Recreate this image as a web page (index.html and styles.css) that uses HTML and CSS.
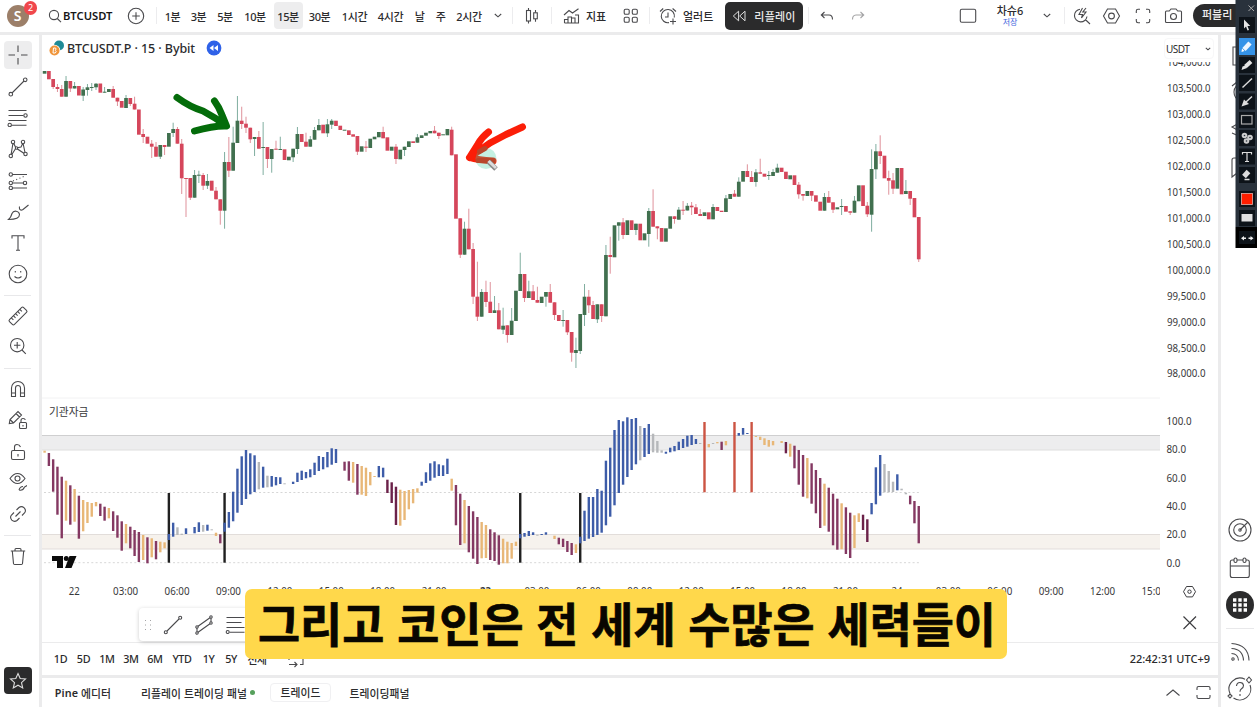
FILE: index.html
```html
<!DOCTYPE html>
<html lang="ko">
<head>
<meta charset="utf-8">
<title>BTCUSDT.P</title>
<link rel="stylesheet" href="styles.css">
</head>
<body>
<div class="app">
  <header class="topbar">
    <div class="slot user"><span class="avatar">S</span><span class="badge">2</span></div>
    <div class="slot search"><svg class="ic" width="14" height="14" viewBox="0 0 14 14"><circle cx="6" cy="6" r="4.6"/><path d="M9.3 9.5 13 13.2"/></svg><b>BTCUSDT</b></div>
    <div class="slot"><svg class="ic" width="18" height="18" viewBox="0 0 18 18"><circle cx="9" cy="9" r="7.7"/><path d="M9 5.2v7.6M5.2 9h7.6"/></svg></div>
    <i class="sep"></i>
    <div class="slot tf">1분</div>
    <div class="slot tf">3분</div>
    <div class="slot tf">5분</div>
    <div class="slot tf">10분</div>
    <div class="slot tf active">15분</div>
    <div class="slot tf">30분</div>
    <div class="slot tf">1시간</div>
    <div class="slot tf">4시간</div>
    <div class="slot tf">날</div>
    <div class="slot tf">주</div>
    <div class="slot tf">2시간</div>
    <div class="slot"><svg class="ic" width="8" height="5" viewBox="0 0 8 5"><path d="M.8 1 4 3.8 7.2 1"/></svg></div>
    <i class="sep"></i>
    <div class="slot"><svg class="ic" width="14" height="18" viewBox="0 0 14 18"><rect x="1.5" y="3.5" width="4" height="10.5"/><path d="M3.5 1v2.5M3.5 14v2.5M10.5 3v2.8M10.5 12v2.8"/><rect x="8.7" y="5.8" width="3.6" height="6"/></svg></div>
    <i class="sep"></i>
    <div class="slot labelled"><svg class="ic" width="17" height="16" viewBox="0 0 17 16"><path d="M1 7 6 2.5 9.5 5 15.5.8M1.5 15v-3.5H5V15M5 11.500V9h3.500v6M8.500 10H12v5M12 7h3.500v8H1.500"/></svg><span>지표</span></div>
    <div class="slot"><svg class="ic" width="16" height="16" viewBox="0 0 16 16"><rect x="1.200" y="1.200" width="5" height="5" rx="1.300"/><rect x="9.300" y="1.200" width="5" height="5" rx="1.300"/><rect x="1.200" y="9.300" width="5" height="5" rx="1.300"/><rect x="9.300" y="9.300" width="5" height="5" rx="1.300"/></svg></div>
    <i class="sep"></i>
    <div class="slot labelled alert"><svg class="ic" width="18" height="18" viewBox="0 0 18 18"><path d="M15.300 10.500A6.600 6.600 0 1 0 10 15.600M9 5.500V10H6M1 4.500 4.200 1.500M13.600 1.500 17 4.500M14 11.500v6M11 14.500h6"/></svg><span>얼러트</span></div>
    <div class="slot"><div class="replay"><svg width="15" height="12" viewBox="0 0 15 12"><path d="M6.600 1.200v9.600L1.300 6zM13 1.200v9.600L7.700 6z"/></svg><span>리플레이</span></div></div>
    <i class="sep"></i>
    <div class="slot"><svg class="ic" width="14" height="10" viewBox="0 0 14 10"><path d="M4.500 1 1.300 4l3.200 3M1.300 4H9c2.500 0 3.500 2 3.500 4.500"/></svg></div>
    <div class="slot dim"><svg class="ic" width="14" height="10" viewBox="0 0 14 10"><path d="M9.500 1l3.200 3-3.200 3M12.700 4H5C2.500 4 1.500 6 1.500 8.500"/></svg></div>
    <span></span>
    <div class="slot"><svg class="ic" width="18" height="16" viewBox="0 0 18 16"><rect x="1.300" y="1.300" width="15.400" height="13" rx="1.500"/></svg></div>
    <div class="slot layout"><b>차슈6</b><small>저장</small></div>
    <div class="slot"><svg class="ic" width="8" height="5" viewBox="0 0 8 5"><path d="M.8 1 4 3.800 7.200 1"/></svg></div>
    <i class="sep"></i>
    <div class="slot"><svg class="ic" width="18" height="18" viewBox="0 0 18 18"><path d="M7 2.300A6.300 6.300 0 1 0 14 9.500M12.300 12.500 17 17M9.500 1 6 7.500h3.500L8.500 11l4.500-6H9.800L13 1"/></svg></div>
    <div class="slot"><svg class="ic" width="19" height="18" viewBox="0 0 19 18"><path d="M5.500 2h8l4 7-4 7h-8l-4-7z"/><circle cx="9.500" cy="9" r="2.900"/></svg></div>
    <div class="slot"><svg class="ic" width="16" height="16" viewBox="0 0 16 16"><path d="M1.300 5V3q0-1.700 1.700-1.700h2M11 1.300h2q1.700 0 1.700 1.700v2M14.700 11v2q0 1.700-1.700 1.700h-2M5 14.700H3Q1.300 14.700 1.300 13v-2"/></svg></div>
    <div class="slot"><svg class="ic" width="19" height="16" viewBox="0 0 19 16"><path d="M2.500 3H5.300L7 1h5l1.700 2h2.800q1 0 1 1v9.500q0 1-1 1h-14q-1 0-1-1V4q0-1 1-1z"/><circle cx="9.500" cy="8.500" r="3"/></svg></div>
    <div class="slot publish"><span>퍼블리</span></div>
  </header>

  <nav class="tools">
    <div class="slot"><span class="picked"><svg class="ic" width="20" height="20" viewBox="0 0 20 20"><path d="M10 .5V7M10 13v6.500M.5 10H7M13 10h6.500"/></svg></span></div>
    <div class="slot"><svg class="ic" width="20" height="20" viewBox="0 0 20 20"><path d="M4 16 16 4"/><circle cx="2.800" cy="17.200" r="1.800"/><circle cx="17.200" cy="2.800" r="1.800"/></svg></div>
    <div class="slot"><svg class="ic" width="21" height="18" viewBox="0 0 21 18"><path d="M1.500 1.500h18M1.500 6.500h15M1.500 11.500h18M4.500 16.200h15"/><circle cx="18.500" cy="6.500" r="1.700"/><circle cx="2.700" cy="16" r="1.700"/></svg></div>
    <div class="slot"><svg class="ic" width="20" height="20" viewBox="0 0 20 20"><path d="M5 4 3 16M15 4l2.300 11M5.500 4 8 9l9 6M3.500 16 8 9l5-1 2-4"/><circle cx="5" cy="3" r="1.700"/><circle cx="15" cy="3" r="1.700"/><circle cx="8.500" cy="9" r="1.200"/><circle cx="2.800" cy="17" r="1.700"/><circle cx="17.500" cy="15" r="1.700"/></svg></div>
    <div class="slot"><svg class="ic" width="20" height="18" viewBox="0 0 20 18"><path d="M4.500 2.500H19M4.500 11h11M4.500 16H19"/><path stroke-dasharray="1 2.500" d="M5 9 17 4"/><circle cx="2.800" cy="2.500" r="1.700"/><circle cx="2.800" cy="11" r="1.700"/><circle cx="17" cy="11" r="1.700"/><circle cx="2.800" cy="16" r="1.700"/></svg></div>
    <div class="slot"><svg class="ic" width="22" height="18" viewBox="0 0 22 18"><path d="M1.500 16.500Q4 14.500 5 10.500C6.500 7 12 7.500 12.500 11.500 12.500 15 9 16.500 1.500 16.500zM12.500 3.500c-.5 3 1 4.500 3.500 3L21.500 2"/></svg></div>
    <div class="slot"><svg class="ic" width="16" height="18" viewBox="0 0 16 18"><path d="M2 4.500V1.800h12v2.700M8 1.800v14.400M6 16.200h4"/></svg></div>
    <div class="slot"><svg class="ic" width="20" height="20" viewBox="0 0 20 20"><circle cx="10" cy="10" r="8.800"/><path d="M6.500 12.500q3.500 3 7 0M7.300 7v1.600M12.700 7v1.600"/></svg></div>
    <i class="rule"></i>
    <div class="slot"><svg class="ic" width="22" height="22" viewBox="0 0 22 22"><g transform="rotate(-45 11 11)"><rect x="1" y="7.500" width="20" height="7" rx="1.500"/><path d="M5 7.500v3M8 7.500v3M11 7.500v3M14 7.500v3M17 7.500v3"/></g></svg></div>
    <div class="slot"><svg class="ic" width="18" height="18" viewBox="0 0 18 18"><circle cx="8.200" cy="8.200" r="6.700"/><path d="M8.200 5v6.400M5 8.200h6.400M13 13l3.800 3.800"/></svg></div>
    <i class="rule"></i>
    <div class="slot"><svg class="ic" width="16" height="18" viewBox="0 0 16 18"><path d="M1.500 16.500V8a6.500 6.500 0 0 1 13 0v8.500h-4V8a2.500 2.500 0 0 0-5 0v8.500zM1.500 13h4M10.500 13h4"/></svg></div>
    <div class="slot"><svg class="ic" width="20" height="20" viewBox="0 0 20 20"><path d="M1.300 13.500 2 9.500 10 1.500l3.500 3.500-8 8zM8 3.500 11.500 7M2 9.500 5.500 13"/><rect x="11.500" y="12.500" width="7" height="6" rx="1"/><path d="M13 12.500v-2q0-2 2-2t2.300 1.500M15 15v1.500"/></svg></div>
    <div class="slot"><svg class="ic" width="16" height="18" viewBox="0 0 16 18"><rect x="1.500" y="7.500" width="13" height="9" rx="1.500"/><path d="M4.500 7.500V4q0-2.500 2.500-2.500T10.500 4M8 11v2.500"/></svg></div>
    <div class="slot"><svg class="ic" width="18" height="20" viewBox="0 0 18 20"><path d="M1 6.500Q4.500 1.500 8.500 1.500T16 6.500Q12.500 11.500 8.500 11.500T1 6.500z"/><circle cx="8.500" cy="6.500" r="2.500"/><path d="M10 18q4 1 5.500-3L18 13.500M10 18q1-3.500 4-3.500"/></svg></div>
    <div class="slot"><svg class="ic" width="18" height="18" viewBox="0 0 18 18"><path d="M7.500 5 10 2.500Q12.500.500 15.200 2.800 17.500 5.500 15.500 8L13 10.500M5 7.500 2.500 10Q.500 12.500 2.800 15.200 5.500 17.500 8 15.500L10.500 13M6.500 11.500l5-5"/></svg></div>
    <i class="rule"></i>
    <div class="slot"><svg class="ic" width="16" height="19" viewBox="0 0 16 19"><path d="M.8 4h14.400M5 4V2.500Q5 1.500 6 1.500h4q1 0 1 1V4M2.300 4 3.500 16.500q.1 1 1.200 1h6.600q1.100 0 1.200-1L13.700 4"/></svg></div>
    <span></span>
    <div class="slot"><span class="star"><svg width="18" height="18" viewBox="0 0 18 18"><path d="M9 1.500 11.200 6.500l5.300.5-4 3.600 1.200 5.400L9 13.200 4.300 16l1.200-5.400L1.500 7l5.300-.5z"/></svg></span></div>
  </nav>

  <main class="chart">
    <svg id="plot" class="plot" width="1176" height="607" viewBox="42 35 1176 607"></svg>
    <div class="legend">
      <svg width="16" height="16" viewBox="0 0 16 16"><circle cx="10" cy="5.500" r="5" fill="#1f8a96"/><circle cx="5.500" cy="10.500" r="5.800" fill="#fff"/><circle cx="5.500" cy="10.500" r="5" fill="#f0953a"/><path d="M4.500 8h2q1.300 1-.2 2.300 1.800 1.200 0 2.700H4z" fill="none" stroke="#fff"/></svg>
      <span class="symbol">BTCUSDT.P · 15 · Bybit</span>
      <svg width="16" height="16" viewBox="0 0 16 16"><circle cx="8" cy="8" r="7.400" fill="#2f62e8"/><path d="M7.500 5v6L3.500 8zM12 5v6L8 8z" fill="#fff"/></svg>
    </div>
    <div class="currency"><span>USDT</span><svg class="ic" width="6" height="4" viewBox="0 0 6 4"><path d="M.8.8 3 2.800 5.200.8"/></svg></div>
    <div class="drawbar">
      <svg class="ic grip" width="8" height="12" viewBox="0 0 8 12"><path d="M1 1.500h1M6 1.500h1M1 6h1M6 6h1M1 10.500h1M6 10.500h1"/></svg>
      <svg class="ic" width="20" height="20" viewBox="0 0 20 20"><path d="M4 16 16 4"/><circle cx="2.800" cy="17.200" r="1.500"/><circle cx="17.200" cy="2.800" r="1.500"/></svg>
      <svg class="ic" width="20" height="20" viewBox="0 0 20 20"><path d="M3 12 17 2M3 18 17 8M3 12v6M17 2v6"/><circle cx="3" cy="12" r="1.200"/><circle cx="17" cy="2" r="1.200"/><circle cx="3" cy="18" r="1.200"/><circle cx="17" cy="8" r="1.200"/></svg>
      <svg class="ic" width="21" height="18" viewBox="0 0 21 18"><path d="M1.500 1.500h18M1.500 6.500h15M1.500 11.500h18M4.500 16.200h15"/><circle cx="2.700" cy="16" r="1.500"/></svg>
    </div>
  </main>

  <footer class="ranges">
    <div class="slot">1D</div><div class="slot">5D</div><div class="slot">1M</div><div class="slot">3M</div><div class="slot">6M</div><div class="slot">YTD</div><div class="slot">1Y</div><div class="slot">5Y</div><div class="slot">전체</div>
    <div class="slot goto"><svg class="ic" width="18" height="18" viewBox="0 0 18 18"><path d="M2 10V5q0-1.500 1.500-1.500h11Q16 3.500 16 5v9.500h-3M2 14.500h8M7.500 12l2.500 2.500L7.500 17"/></svg></div>
    <div class="clock">22:42:31 UTC+9</div>
  </footer>

  <footer class="panels">
    <div class="slot"><b>Pine</b>&nbsp;에디터</div>
    <div class="slot">리플레이 트레이딩 패널<i class="dot"></i></div>
    <div class="slot"><span class="tab">트레이드</span></div>
    <div class="slot">트레이딩패널</div>
    <span></span>
    <div class="slot"><svg class="ic" width="16" height="9" viewBox="0 0 16 9"><path d="M1.500 7.500 8 2l6.500 5.500"/></svg></div>
    <div class="slot"><svg class="ic" width="15" height="15" viewBox="0 0 15 15"><path d="M1 5V3q0-1.500 1.500-1.500h10Q14 1.500 14 3v2M1 10v2q0 1.500 1.500 1.500h10Q14 13.500 14 12v-2"/></svg></div>
  </footer>

  <aside class="side">
    <svg class="ic peek" width="14" height="150" viewBox="0 0 14 150"><path d="M13 3H3v18h10M2 42l5-4M13 39Q4 41 4 48t7 9M11 78 2 83l9 5M2 89l9 4M13 114H4q-2 0-2 2v17l5-4h6"/></svg>
    <div class="slot"><svg class="ic" width="24" height="24" viewBox="0 0 24 24"><circle cx="12" cy="12" r="11"/><circle cx="12" cy="12" r="6.300"/><circle cx="12" cy="12" r="1.200"/><path d="M12 12 20 4"/></svg></div>
    <div class="slot"><svg class="ic" width="22" height="22" viewBox="0 0 22 22"><rect x="1.300" y="3" width="19" height="17.500" rx="2"/><path d="M1.300 9h19"/><rect x="5" y="1" width="3" height="4.500" rx="1.500"/><rect x="14" y="1" width="3" height="4.500" rx="1.500"/></svg></div>
    <div class="slot"><span class="apps"><svg width="16" height="16" viewBox="0 0 16 16"><path d="M1 3h14M1 8h14M1 13h14"/></svg></span></div>
    <i class="rule"></i>
    <div class="slot"><svg class="ic" width="20" height="20" viewBox="0 0 20 20"><circle cx="3" cy="17" r="1.200"/><path d="M1.500 11.500q6.500 0 7 7M1.500 6.500q11.500.5 12 12M1.500 1.500q17 1 17.500 17"/></svg></div>
    <div class="slot"><svg class="ic" width="26" height="26" viewBox="0 0 26 26"><path d="M18 3.200A11 11 0 0 0 3 17.500M6.500 22A11 11 0 0 0 23 9M9.500 10q.3-3.500 3.500-3.500t3.500 3q0 2-2 3.200-1.500 1-1.500 3M13 18v2M22 1l2.500 3L22 7l-2.500-3zM3 18l2 2-2 2-2-2z"/></svg></div>
  </aside>

  <div class="annotator">
    <svg width="22" height="248" viewBox="1235 0 22 248">
      <rect x="1235.500" width="22" height="227" fill="#29323c"/><rect x="1235.500" y="227" width="22" height="21" fill="#000"/>
      <g fill="#0d1319"><rect x="1239" y="17" width="16" height="16"/><rect x="1239" y="57" width="16" height="16"/><rect x="1239" y="75" width="16" height="16"/><rect x="1239" y="93.500" width="16" height="16"/><rect x="1239" y="112" width="16" height="16"/><rect x="1239" y="130" width="16" height="16"/><rect x="1239" y="148.500" width="16" height="16"/><rect x="1239" y="167" width="16" height="16"/><rect x="1239" y="191" width="16" height="16"/><rect x="1239" y="210" width="16" height="16"/><rect x="1239" y="231" width="16" height="13"/></g>
      <rect x="1239" y="38" width="16" height="17" fill="#3593e8"/>
      <path d="M1248.500 5.500 1254 11M1254 5.500 1248.500 11" stroke="#aaa"/>
      <path d="M1244 19.500v9l2-2 1.500 4 1.500-.6-1.500-3.900h2.800z" fill="#e4e4e4"/>
      <path d="M1244 49.500 1250 43" stroke="#eef6ff" stroke-width="4.500"/><path d="M1241.500 52l.5-3.500 2.500 2.500z" fill="#fff"/>
      <path d="M1245.500 66.500 1251 61.500" stroke="#e4e4e4" stroke-width="4"/><path d="M1241.500 70l1-3.500 3-1 1.500 2.500z" fill="#e4e4e4"/>
      <path d="M1242.500 87.500 1252 78.500" stroke="#ddd" stroke-width="1.400"/>
      <path d="M1246 102 1252 96.500" stroke="#ddd" stroke-width="1.400"/><path d="M1241.500 106.500 1244 99.500 1249 104z" fill="#ddd"/>
      <rect x="1241.500" y="115.500" width="10.500" height="8.500" fill="none" stroke="#aaa" stroke-width="1.200"/>
      <g fill="#ccc"><circle cx="1244.500" cy="135.500" r="2.800"/><circle cx="1250" cy="137.500" r="2.800"/><circle cx="1246.500" cy="141" r="2.800"/></g><g fill="#29323c"><circle cx="1244.500" cy="135.500" r=".8"/><circle cx="1250" cy="137.500" r=".8"/><circle cx="1246.500" cy="141" r=".8"/></g>
      <path d="M1242.500 154.500v-2h9v2M1247 152.500v9M1245 161.500h4" fill="none" stroke="#ddd" stroke-width="1.200"/>
      <path d="M1244 176.500 1248.500 171.500" stroke="#ddd" stroke-width="5"/><path d="M1244.500 179.500h5" stroke="#ddd" stroke-width="1.500"/>
      <rect x="1241.500" y="193.500" width="11" height="11" fill="#ff1e00" stroke="#e6b0a8" stroke-width=".8"/>
      <rect x="1241.500" y="214" width="11" height="7.500" fill="#e0e0e0"/>
      <path d="M1241 238.300l3-2.300v1.500h2v1.600h-2v1.500zM1253.500 238.300l-3-2.300v1.500h-2v1.600h2v1.500z" fill="#eee"/>
    </svg>
  </div>

  <div class="caption"><svg width="762" height="69" viewBox="0 0 762 69"><text x="13" y="52.500" textLength="738" lengthAdjust="spacingAndGlyphs">그리고 코인은 전 세계 수많은 세력들이</text></svg></div>
</div>
<script src="chart.js"></script>
</body>
</html>
```

FILE: styles.css
```css
* { box-sizing: border-box; }
body { margin: 0; font-family: "Noto Sans", "Noto Sans CJK KR", sans-serif; color: #2b2b2d; font-size: 11px; }
.app {
  position: relative; width: 1257px; height: 707px; overflow: hidden; background: #ebebec;
  display: grid; grid-template-columns: 39px 1176px 1fr; grid-template-rows: 32px 607px 30px 1fr; column-gap: 3px; row-gap: 3px;
  grid-template-areas: "top top top" "tools chart side" "tools ranges side" "tools panels side";
}
.slot { display: flex; align-items: center; justify-content: center; white-space: nowrap; min-width: 0; }
.ic { display: block; fill: none; stroke: #4a4a4d; stroke-width: 1.1; flex: none; }
.ic circle, .ic rect { fill: #fff; }
b { font-weight: 600; }

.topbar {
  grid-area: top; background: #fff; padding-bottom: 1px; display: grid;
  grid-template-columns: 40px 82px 28px 12px 22px 30px 23px 37px 29px 34px 36px 36px 22px 20px 37px 20px 8px 32px 6px 60px 33px 4px 70px 86px 3px 34px 28px 76px 40px 44px 30px 4px 32px 27px 35px 27px 1fr;
}
.sep { width: 1px; height: 17px; background: #ececee; align-self: center; justify-self: center; }
.user { position: relative; }
.avatar { width: 22px; height: 22px; border-radius: 50%; background: #9c7f69; color: #fff; font: 600 14px/22px "Noto Sans", sans-serif; text-align: center; margin-right: 5px; }
.badge { position: absolute; left: 24px; top: 1px; width: 13px; height: 14px; border-radius: 7px; background: #f0474c; color: #fff; font-size: 9px; line-height: 14px; text-align: center; }
.search { gap: 1px; justify-content: flex-start; padding-left: 8px; font-size: 11.200px; letter-spacing: 0; }
.search b { color: #161617; }
.tf { font-size: 11px; letter-spacing: -.4px; font-weight: 500; padding-right: 1px; }
.active { background: #ededee; border-radius: 4px; height: 27px; align-self: center; }
.labelled { justify-content: flex-start; padding-left: 9px; gap: 6px; font-weight: 500; letter-spacing: -.1px; }
.alert { padding-left: 8px; letter-spacing: 0; }
.replay { width: 78px; height: 28px; border-radius: 5px; background: #2b2b2c; color: #e8e8e8; display: flex; align-items: center; justify-content: center; gap: 7px; font-weight: 500; letter-spacing: .2px; }
.replay svg { fill: none; stroke: #ddd; }
.dim { opacity: .5; }
.layout { flex-direction: column; line-height: 12px; font-size: 11px; }
.layout b { font-weight: 500; }
.layout small { font-size: 8px; line-height: 9px; color: #3d64dd; }
.publish { justify-content: flex-start; }
.publish span { margin-left: 6px; width: 70px; height: 23px; border-radius: 12px; background: #2b2b2c; color: #eee; line-height: 22px; padding-left: 9px; font-weight: 500; }

.tools {
  grid-area: tools; background: #fff; padding-right: 4px; display: grid;
  grid-template-rows: 40px 24px 37px 26px 38px 24px 37px 25px 18px 24px 36px 8px 33px 30px 34px 26px 38px 5px 36px 80px 53px;
}
.rule { display: block; width: 27px; height: 1px; background: #e8e8ea; align-self: center; justify-self: center; }
.picked { width: 28px; height: 28px; border-radius: 4px; background: #ededee; display: grid; place-items: center; }
.star { width: 28px; height: 27px; border-radius: 4px; background: #2b2b2c; display: grid; place-items: center; }
.star svg { fill: none; stroke: #ddd; stroke-width: 1.1; }

.chart { grid-area: chart; background: #fff; position: relative; }
.plot { display: block; }
.axis { font-size: 11px; fill: #38383a; }
.legend { position: absolute; left: 7px; top: 4px; height: 18px; display: flex; align-items: center; }
.symbol { width: 129px; margin: 0 10px 0 2px; font-size: 12.500px; letter-spacing: -.08px; font-weight: 500; white-space: nowrap; }
.currency { position: absolute; left: 1122px; top: 3px; width: 50px; height: 21px; border: 1px solid #f7f7f8; border-radius: 4px; display: flex; align-items: center; justify-content: space-between; padding: 0 2px 0 1px; font-size: 10px; background: #fff; letter-spacing: -.5px; }
.drawbar { position: absolute; left: 97px; top: 573px; width: 260px; height: 33px; background: #fff; border-radius: 4px; box-shadow: 0 1px 4px rgba(0,0,0,.2); display: flex; align-items: center; gap: 11px; padding-left: 5px; }
.grip { opacity: .5; }

.ranges { grid-area: ranges; margin-top: -2px; padding-bottom: 1px; background: #fff; display: grid; grid-template-columns: 21px 25px 22px 26px 22px 32px 21px 24px 28px 50px 1fr; padding-left: 8px; font-weight: 500; font-size: 10.800px; letter-spacing: -.4px; }
.clock { justify-self: end; align-self: center; padding-right: 8px; letter-spacing: 0; font-size: 11px; }
.panels { grid-area: panels; background: #fff; display: grid; grid-template-columns: 82px 148px 57px 101px 727px 32px 29px; font-size: 10.800px; letter-spacing: .1px; font-weight: 500; }
.dot { width: 5px; height: 5px; border-radius: 50%; background: #56a05c; margin-left: 3px; }
.tab { border: 1px solid #f0f0f2; border-radius: 4px; width: 61px; flex: none; text-align: center; line-height: 17px; }

.side { grid-area: side; background: #fff; padding-left: 2px; display: grid; grid-template-rows: 475px 39px 38px 36px 10px 38px 36px; }
.side .rule { width: 28px; }
.peek { margin: 9px 0 0 7px; }
.apps { width: 28px; height: 28px; border-radius: 50%; background: #2b2b2c; display: grid; place-items: center; }
.apps svg { stroke: #fff; stroke-width: 3.400; stroke-dasharray: 3.400 1.900; }
.annotator { position: absolute; left: 1235px; top: 0; width: 22px; height: 248px; }
.annotator svg { display: block; }

.caption { position: absolute; left: 244.500px; top: 589px; width: 762px; height: 69.500px; border-radius: 7px; background: #ffd84b; }
.caption svg { display: block; overflow: visible; }
.caption text { font: 700 46.500px "Noto Sans CJK KR", sans-serif; fill: #090600; stroke: #090600; stroke-width: .7; }
```

FILE: chart.js
```js
const plot = document.getElementById('plot');
const STEP = 4.285, X0 = 44.6;
const x = i => X0 + STEP * i;
const out = [];
const rect = (cx, w, top, bottom, fill, extra = '') =>
  out.push(`<rect x="${(cx - w / 2).toFixed(2)}" y="${top}" width="${w}" height="${Math.max(bottom - top, 1).toFixed(2)}" fill="${fill}" ${extra}/>`);
const label = (px, py, text, width, anchor = 'start', weight = 400) =>
  out.push(`<text class="axis" x="${px}" y="${py}" text-anchor="${anchor}" font-weight="${weight}" textLength="${width}" lengthAdjust="spacingAndGlyphs">${text}</text>`);

// Candles: direction, body top, body bottom, wick high, wick low (0 = no wick)
const candles = `g71,73.7 r71,79.3 r79,87,0,89 r87,89,84,92 r89,96.7,85 g81,96.7,76 r81,88.5,0,92 g86,88.5,82 r86,95.5 g89.5,95.7,87,101
g87.3,90,84,95.7 g87,88,83,91 g83.7,87.3,83,90 r83.5,92.7 g91.7,92.7,87 g89,92 r89,97.7,86 r97.7,101.5,0,106 r101,107.7 g98,108,95
r98,104,0,106 r103.7,109.5,96.7 r109.5,134.7 r134,137,129,143 r136.7,143.7 r143.7,146.7,140,158 r146.7,156.7,142 g145,156.7,0,159 r145,147,0,155 g133,146.7
g129,133,122.7,137 r129,143.7,127 r143.7,178.3,139,194 r178,179,0,217 r178,197.7,0,200 g175,197.7,170 g174.7,175.7,170.7,183 r175,185.7,173,190 g181,185.7,174,189 r180.7,190.7
r190.7,199.3,187 r199.3,210.7,0,224.7 g162,210.7,152,228.7 r162,170.7,137,177 g142.7,170.7,126.7 g120.7,143,96 r120.7,124,106.7,129 r123.7,127.7,116.7,133 r127.7,139.3,0,143 g137,139,0,156
r137,148.7,131 g147,148,122,175 r147,159,0,168 g149,159,0,172.7 r148.7,149.7,140.7 g149,150,136.7 r149.3,160 g156.7,160.3 g148.7,157.3,0,162 g134,149,127,154
r134,142 r141.7,146.7,132.7 g139.3,146.7,136 g130,139.7,127 g125,130.3,119 r124.7,133.3 g124.3,133.3,119,137 g120.7,124.7,119,129 r120.7,126 r125.7,130
g129.7,130.7 r130.3,135 r134.3,136.7 r136,151.7,0,155 g146.3,151.7 r146.7,147.7,141,152 g138.7,148 g136.7,139.3 g132,137.3 r132,138.3,126.7
r137.3,150.7 g146.7,150.7 r146.7,159,144,164 g149.7,159.3 g146.7,150,0,156 g141.3,147 r141.3,143 g137.3,142.7,134 g135.3,138 g132.7,135.7
g131,133.3 r130.7,133.3,126 r132.7,136,0,139 g134.3,135.3 g129,135.3 r129.7,155.3,126.7 r154.3,218.7 r218.3,254.7,0,258 g228.7,254.7,221.7 r228.7,249.3,208.7
r249,296.7,243,304 r296.7,316.7,261.7,321 g292,316.7,289 r292,302,280.7,307 r301.7,313,282 g310.3,313,296 r310.3,329.3,303 g325.7,329.7,307.7,334 r325.3,335,0,342.7 g320.7,335,308
g290.7,321 g274,291,252.7 r274,298,0,302 g291.3,298,280.7 r291.3,300,285 r300,302.7,286.7 g296.7,303 g292,296.7,0,306.7 r292,302.7,284 r302.3,315,0,320
r315,321 g320,320.7,310,326.7 r320,332.3,0,335 r332,352.7,0,361.7 g350,353,337.7,368 g314,351,0,354 g296.7,315,284,326 r296.7,305.3,290,313 r305,319,301 g304.3,319.3,0,323
r304.3,316,0,322 g255,316.3,245 r255,257,236.7,273.7 g225.3,257.3 g222.3,225.7,0,240.7 r222.3,235,218,239 g220.3,235 r220.3,230 g223.7,230,0,235 r223.7,240.3
g233.3,240.3 g211,234,208,246.7 r211,226.7,189.3 r226.3,228.3,0,239.3 r228,241.7 g228.3,241.7 g216.3,228.7 r216.3,219,0,223.7 g209.7,219.7,207 r209.7,210.7,201,215
g205.8,210.5,203 r205.7,207.3,202,215 r207.3,214,204 r214,216,209 g212.3,216 r212.3,219.3 g207,219.3,204 r207,211 r210.7,212 g198.3,212,195
g194,199 r193.7,196.7,190 g181.7,196.7,177.3 g171,181.7 r171,177,164.3 r177,182,171 g172.3,182,169,186.7 r172.3,173.7,158.7 r173.7,176.7 g175,176,171,180
g172,176,169 g167.7,172.7,163.7 r167.7,172 r171.7,179 g175.3,179.3 r175.3,185 r184.7,194.3,182,198.7 r194,195.7,0,200.7 g191,196 r191,195.7,0,201
r195.3,201.7 r201.7,210.7 g197,210.7,193 r197,202.7,191 r202.3,209.7,0,213 g207.3,209.3 g206,207,199,215 r206,211.7 r211.3,212.7,0,215 g200.7,212.7,196
g185.3,201.3 r185.3,206 r205.7,214.3,202,217 g169,214.7,149.3,231.7 g151.3,169.3,144,179 r151.3,156,135.3,164 r155.7,178.3 r178,180.7,170.7,194.7 r180.3,188.7,173,194 g168,188.7
r168,194.3 g191,194,180 r191,198.7,0,205 r198,217.3 r217,259.3,0,262`.split(/\s+/);

// Oscillator: index, colour key, bar top, bar bottom
const bars = `0o450.7-452.7 1m453-466 2m459.3-491.7 3m466.7-514.7 4m476.7-538.3 5o480.7-520.7 6m485.3-524.7 7o489-521.7 8m495.7-538.7 9o500-531.3
10o502-523 11o503-516.7 12o502-506.3 13m503.7-516 14m506.7-520.7 15o508-518.3 16m511.3-531 17m515.3-537.7 18m521.3-550.7 19o524-543.3
20m526.7-548.3 21m530-556 22m532-562 23o535-560 24m537.3-563.3 25o538.3-557.3 26m541-559.3 27o541.7-552.3 28o542.3-548.3 29k493-562.7 29b534-540
30b522.7-536.7 31g527.3-535 32g533.7-535 33b528.3-534 35b527-533.3 36b522.3-532 37g525-531.7 38b524.7-530.7 39g529.3-530.3 40o532.7-536 41m534.3-543.3
42k493-562.7 42b522.7-531.7 43b512-527.7 44b491.7-521.3 45b468.7-512.7 46b456.3-505 47b450-499 48b453.3-494.3 49b455.3-492 50g462-489.3 51b466.7-487.7
52g475.7-487.3 53b476-486.7 54b477-485.3 55b477.3-484 56g483.3-484.2 58b481.7-484 59b472.7-482 60b470.7-480 61b472-478.3 62b469.3-477.3 63b462.7-475
64b456-471 65b457-469.3 66b452-467.3 67b448.3-464.7 68b449-463 70m461.7-470.7 71m461.3-480.7 72o462-482.7 73m464-494.7 74o466-494.7 75o467.7-496
76o472-485.3 77o476-476.7 78b466-477.3 79b467.7-477.3 80d479.7-493 81d482.3-503 82d486.7-525 83o489.7-525.7 84o491-520 85o490-509.3 86o489-503.3
87o488.3-492.7 88b481.7-485.7 89b472.3-483 90b463.3-480.7 91b461.3-477.7 92b464.3-476 93b465.3-476 94b458.7-474 95o478.7-490.7 96m485-525.3 97m493.7-545
98o500-543.3 99m506-552.3 100m511.3-558.7 101m517-564 102o522-558.3 103o525-558 104m529.3-560 105m532.3-561 106m535.3-564.7 107o538.7-563.3 108o541.7-563.3
109o543-558.7 110o541.7-546 111k493-562.7 111b534-538.3 112b533-536.7 113b531-536 114b532.3-535 115g534.7-535.3 116b534-535 117b532.3-534.7 119o535.7-539
120m537.7-544.3 121m538.7-547 122m541-552 123m543-555 124o544.3-553 125k493-562.7 125b536.7-543.3 126b510.7-541 127b497-538.7 128b497-537 129b489-535
130b490.7-532.7 131b460.7-525.3 132b447.7-516.7 133b430-505.3 134b420-493 135b421.3-484.7 136b417.3-477 137b419-470 138b418-464.3 139g426-460.3 140b428-457
141b424-454 142g433.7-452.3 143g441-452.7 144g450.3-452.7 145b451.7-453.7 146b447.7-452.3 147b446-451.3 148b441.7-450 149b439-448 150b435.7-446.7
151b435-445 152b439-444 153g443-443.7 154r422-492.3 155o444-447.3 156g443-443.7 157o442-443.3 158m441.7-450 159o441-445.3 161r422-492.3 162b433-435.7
163b428-434.7 164b433-433.7 165r422-492.3 166o436-436.7 167o436.7-440 168o438.3-445 169o440-446.7 170o441-445.3 172o441-443 173d442-453.3 174o443.7-456.7
175m445.7-468.3 176m450-484.7 177m455-496.7 178o458-498.3 179m463.3-503.7 180m470-513.3 181m478-528 182o483.7-525.7 183m487.7-531.7 184m493.7-545.3
185m498.7-549.7 186o503.3-549.3 187m507.3-554 188m512.7-558 189o515.3-548 190o513.3-522 191d514.7-530 192d519.3-542 193b503-514.3 194b467.3-504.3
195b455-495.7 196g464-492.3 197g471-492.3 198g481.7-492 199b474.3-490.3 200g488.7-490.3 201g492.7-494.3 202m495.7-504.3 203m501-523.3 204m506-543.3`.split(/\s+/);
const barColor = { m: '#843862', d: '#6b2149', o: '#e8b777', b: '#3d5ca8', g: '#b6b8bb', k: '#202020', r: '#cc5443' };

// Pane separator and threshold bands
out.push('<path d="M42 398h1118" stroke="#f2f2f3"/>');
out.push('<rect x="42" y="435" width="1118" height="15" fill="#ededee"/><path d="M42 435.500h1118" stroke="#cfcfd0"/><path d="M42 450h1118" stroke="#dedede"/>');
out.push('<rect x="42" y="534" width="1118" height="15" fill="#f6f2ed"/><path d="M42 534.500h1118M42 549h1118" stroke="#e2ddda"/>');
out.push('<path d="M44 492.500h876M44 562.700h876" stroke="#ccc" stroke-dasharray="2 2.300" stroke-width=".8"/>');

candles.forEach((c, i) => {
  const up = c[0] === 'g';
  const [top, bottom, high, low] = c.slice(1).split(',').map(Number);
  if (high || low) rect(x(i), 1, high || top, low || bottom, up ? '#80aea0' : '#df929b');
  rect(x(i), 3.7, top, bottom, up ? '#41704f' : '#d5465b');
});
bars.forEach(b => {
  const [, i, key, top, bottom] = b.match(/^(\d+)(\w)([\d.]+)-([\d.]+)$/);
  rect(x(+i), 2.4, +top, +bottom, barColor[key]);
});

// Price, oscillator and time scales
out.push('<clipPath id="under"><path d="M1160 62h58v20h-58z"/></clipPath><g clip-path="url(#under)">');
label(1167, 65.5, '104,000.0', 43.5);
out.push('</g>');
for (let k = 0; k < 12; k++) {
  const v = 103500 - 500 * k;
  const s = v.toLocaleString('en-US') + '.0';
  label(1167, 91.8 + 25.97 * k, s, s.length > 8 ? 43.5 : 38.5);
}
[100, 80, 60, 40, 20, 0].forEach((v, k) => label(1166.5, 424.8 + 28.4 * k, v.toFixed(1), [25, 19.5, 19.5, 19.5, 19.5, 14][k]));
out.push('<clipPath id="times"><path d="M42 580h1118v25H42z"/></clipPath><g clip-path="url(#times)">');
['22', '03:00', '06:00', '09:00', '12:00', '15:00', '18:00', '21:00', '23', '03:00', '06:00', '09:00', '12:00', '15:00', '18:00', '21:00', '24', '03:00', '06:00', '09:00', '12:00', '15:00']
  .forEach((t, k) => label(74.2 + 51.42 * k, 595.2, t, t.length > 2 ? 25 : 11, 'middle', t === '23' ? 700 : 400));
out.push('</g>');
out.push('<text class="axis" x="49" y="416" textLength="39.500" lengthAdjust="spacingAndGlyphs">기관자금</text>');

// Brand mark
out.push('<path fill="#0b0b0b" d="M52 556h11v12h-6v-7h-5zM69.500 556H76.500L71.500 568H65z"/><circle cx="66.300" cy="558.500" r="2.500" fill="#0b0b0b"/>');

// Axis settings and close
out.push('<g fill="none" stroke="#3d3d40"><path d="M1186.500 586.500h6l3 5.200-3 5.200h-6l-3-5.200z"/><circle cx="1189.500" cy="591.700" r="1.700"/><path stroke-width="1.200" d="M1183.500 616.500l12.500 12.500M1196 616.500l-12.500 12.500"/></g>');

// Hand-drawn arrows
out.push('<g fill="none" stroke-linecap="round" stroke-linejoin="round" stroke-width="7"><path stroke="#046c0a" d="M177 97.500Q190 107 203 111 216 118 226 125.500M214.500 101Q219 107 222 115L226.500 126Q214 125.500 194.500 131"/>');
out.push('<path stroke="#fb1e08" d="M522.500 127 506 134.500 490 143 469.500 157.500M488.500 132Q482 137 478 144L469.500 157.500Q478 160 493 161"/></g>');
out.push('<circle cx="486" cy="158.500" r="10.500" fill="#3fcf9f" opacity=".3"/><path d="M479.500 151.500 485 148.500M478 160.500H493" stroke="#b9472c" stroke-width="5" stroke-linecap="round" fill="none"/>');
out.push('<path d="M488.500 161.500 496 169" stroke="#8a8a8a" stroke-width="5"/><path d="M488.500 161 496 168" stroke="#dcdcdc" stroke-width="3"/>');

plot.innerHTML = out.join('');
```
